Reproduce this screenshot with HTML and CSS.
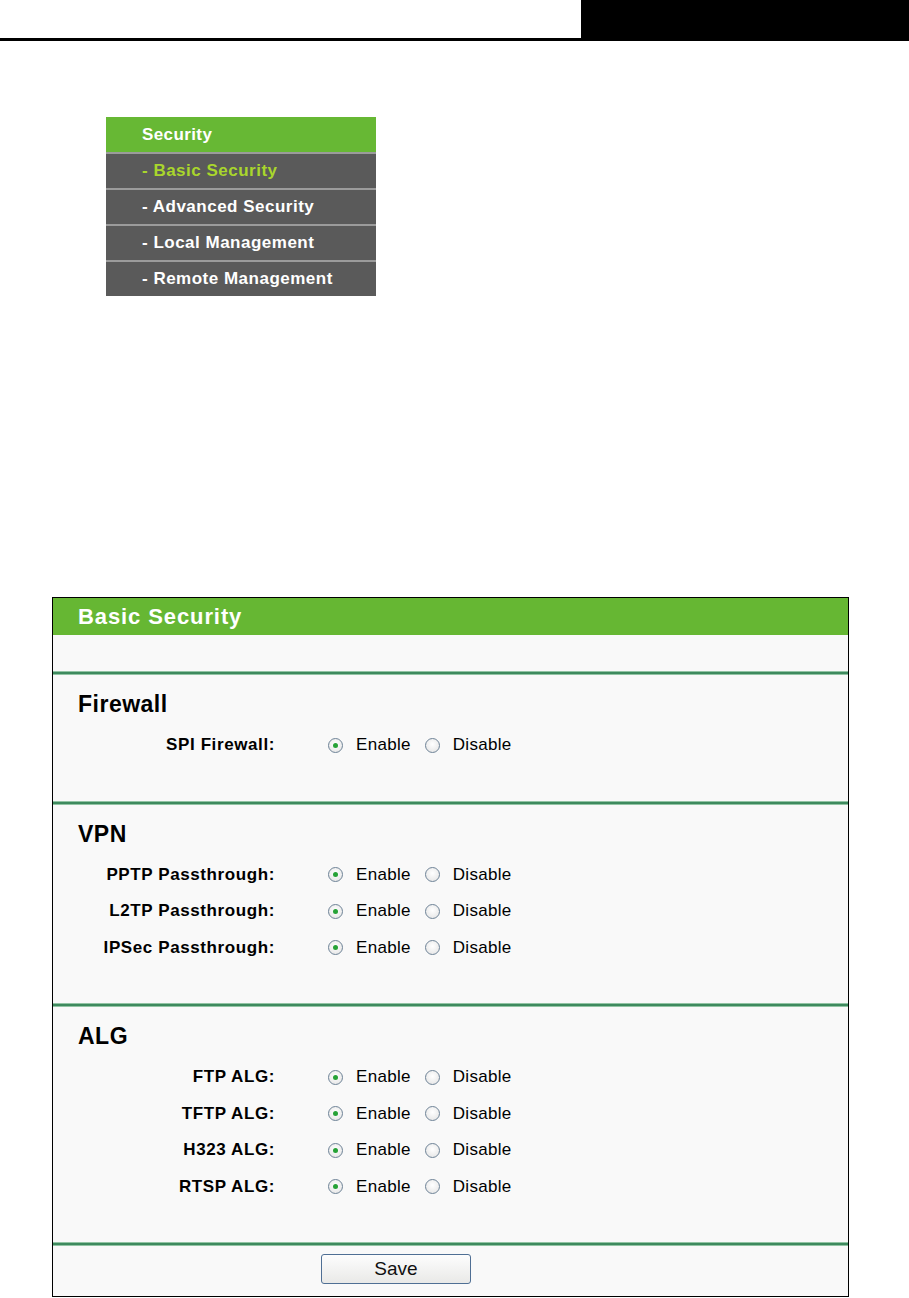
FILE: index.html
```html
<!DOCTYPE html>
<html lang="en">
<head>
    <meta charset="UTF-8">
    <title>Basic Security</title>
    <link rel="stylesheet" href="styles.css">
</head>
<body>
    <div class="pagehead">
        <div class="pagehead-tab"></div>
    </div>

    <div class="menu">
        <div class="menu-title">Security</div>
        <div class="menu-item active">- Basic Security</div>
        <div class="menu-item">- Advanced Security</div>
        <div class="menu-item">- Local Management</div>
        <div class="menu-item">- Remote Management</div>
    </div>

    <form class="panel" onsubmit="return false">
        <div class="panel-title">Basic Security</div>
        <div class="panel-blank"></div>
        <div class="divider"></div>

        <div class="section">
            <h2>Firewall</h2>
            <div class="row">
                <span class="label">SPI Firewall:</span>
                <label class="opt"><input type="radio" name="spi" checked>Enable</label>
                <label class="opt"><input type="radio" name="spi">Disable</label>
            </div>
        </div>
        <div class="divider"></div>

        <div class="section">
            <h2>VPN</h2>
            <div class="row">
                <span class="label">PPTP Passthrough:</span>
                <label class="opt"><input type="radio" name="pptp" checked>Enable</label>
                <label class="opt"><input type="radio" name="pptp">Disable</label>
            </div>
            <div class="row">
                <span class="label">L2TP Passthrough:</span>
                <label class="opt"><input type="radio" name="l2tp" checked>Enable</label>
                <label class="opt"><input type="radio" name="l2tp">Disable</label>
            </div>
            <div class="row">
                <span class="label">IPSec Passthrough:</span>
                <label class="opt"><input type="radio" name="ipsec" checked>Enable</label>
                <label class="opt"><input type="radio" name="ipsec">Disable</label>
            </div>
        </div>
        <div class="divider"></div>

        <div class="section">
            <h2>ALG</h2>
            <div class="row">
                <span class="label">FTP ALG:</span>
                <label class="opt"><input type="radio" name="ftp" checked>Enable</label>
                <label class="opt"><input type="radio" name="ftp">Disable</label>
            </div>
            <div class="row">
                <span class="label">TFTP ALG:</span>
                <label class="opt"><input type="radio" name="tftp" checked>Enable</label>
                <label class="opt"><input type="radio" name="tftp">Disable</label>
            </div>
            <div class="row">
                <span class="label">H323 ALG:</span>
                <label class="opt"><input type="radio" name="h323" checked>Enable</label>
                <label class="opt"><input type="radio" name="h323">Disable</label>
            </div>
            <div class="row">
                <span class="label">RTSP ALG:</span>
                <label class="opt"><input type="radio" name="rtsp" checked>Enable</label>
                <label class="opt"><input type="radio" name="rtsp">Disable</label>
            </div>
        </div>
        <div class="divider"></div>

        <div class="actions">
            <button type="submit">Save</button>
        </div>
    </form>
</body>
</html>
```

FILE: styles.css
```css
body {
    margin: 0;
    background: #fff;
    font-family: "Liberation Sans", Arial, sans-serif;
    color: #000;
}

.pagehead {
    display: flex;
    height: 38px;
    border-bottom: 3px solid #000;
}

.pagehead-tab {
    width: 328px;
    margin-left: auto;
    background: #000;
}

/* side menu */
.menu {
    width: 270px;
    margin: 76px 0 0 106px;
    background: #5a5a5a;
}

.menu-title {
    height: 35px;
    line-height: 35px;
    padding-left: 36px;
    background: #67b834;
    color: #fff;
    font-size: 17px;
    font-weight: bold;
    letter-spacing: 0.4px;
}

.menu-item {
    height: 34px;
    line-height: 34px;
    padding-left: 36px;
    border-top: 2px solid #9b9b9b;
    color: #fff;
    font-size: 17px;
    font-weight: bold;
    letter-spacing: 0.5px;
}

.menu-item.active {
    color: #a9d62c;
}

/* main panel */
.panel {
    width: 795px;
    margin: 301px 0 0 52px;
    border: 1px solid #000;
    background: #f9f9f9;
}

.panel-title {
    height: 37px;
    line-height: 37px;
    padding-left: 25px;
    background: #66b733;
    color: #fff;
    font-size: 22px;
    font-weight: bold;
    letter-spacing: 0.9px;
}

.panel-blank {
    height: 36px;
}

.divider {
    height: 2px;
    background: #3e8a5e;
    border-top: 1px solid #92c4a4;
    border-bottom: 1px solid #92c4a4;
}

.section {
    padding: 14px 0 37px;
}

.section h2 {
    margin: 0 0 8px;
    padding-left: 25px;
    height: 30px;
    line-height: 30px;
    font-size: 23px;
    font-weight: bold;
    letter-spacing: 0.5px;
}

.row {
    display: flex;
    align-items: center;
    height: 36.5px;
    font-size: 17px;
}

.label {
    width: 222px;
    text-align: right;
    font-weight: bold;
    letter-spacing: 0.6px;
    margin-right: 53px;
}

.opt {
    display: flex;
    align-items: center;
    margin-right: 14px;
    letter-spacing: 0.3px;
}

.opt input {
    appearance: none;
    -webkit-appearance: none;
    width: 15px;
    height: 15px;
    margin: 0 13px 0 0;
    border: 1px solid #6e8397;
    border-radius: 50%;
    background: radial-gradient(circle at 50% 40%, #fff 0%, #e2e2e2 100%);
    display: flex;
    align-items: center;
    justify-content: center;
}

.opt input:checked::after {
    content: "";
    width: 5px;
    height: 5px;
    border-radius: 50%;
    background: #26a236;
}

.actions {
    height: 50px;
    padding: 8px 0 0 268px;
    box-sizing: border-box;
}

button {
    width: 150px;
    height: 30px;
    font-family: "Liberation Sans", Arial, sans-serif;
    font-size: 19px;
    color: #111;
    background: linear-gradient(#fdfdfd, #e9e9e7);
    border: 1px solid #4f6f94;
    border-radius: 3px;
    cursor: pointer;
}
```
